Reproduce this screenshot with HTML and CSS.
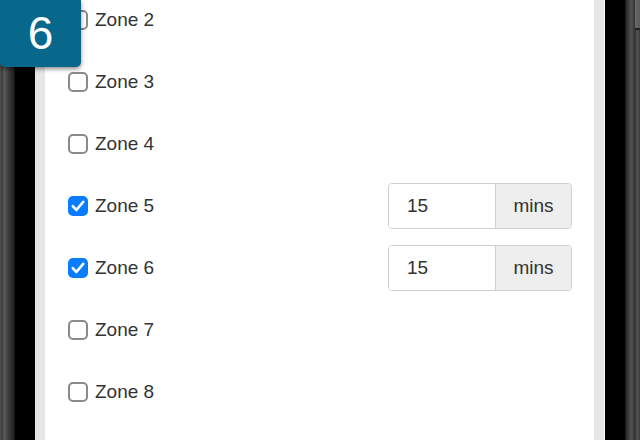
FILE: index.html
```html
<!DOCTYPE html>
<html>
<head>
<meta charset="utf-8">
<link rel="stylesheet" href="styles.css">
</head>
<body>
<div class="device">
  <div class="bezel bezel-left"></div>
  <div class="black"></div>
  <div class="gutter"></div>
  <div class="screen">
    <div class="list">
      <div class="row">
        <label class="check"><span class="box"></span><span class="name">Zone 2</span></label>
      </div>
      <div class="row">
        <label class="check"><span class="box"></span><span class="name">Zone 3</span></label>
      </div>
      <div class="row">
        <label class="check"><span class="box"></span><span class="name">Zone 4</span></label>
      </div>
      <div class="row">
        <label class="check"><span class="box checked"><svg viewBox="0 0 20 20" width="20" height="20"><polyline points="4.8,10.2 8.4,14 15.2,5.8" fill="none" stroke="#fff" stroke-width="2.6" stroke-linecap="round" stroke-linejoin="round"/></svg></span><span class="name">Zone 5</span></label>
        <div class="group"><div class="field">15</div><div class="addon">mins</div></div>
      </div>
      <div class="row">
        <label class="check"><span class="box checked"><svg viewBox="0 0 20 20" width="20" height="20"><polyline points="4.8,10.2 8.4,14 15.2,5.8" fill="none" stroke="#fff" stroke-width="2.6" stroke-linecap="round" stroke-linejoin="round"/></svg></span><span class="name">Zone 6</span></label>
        <div class="group"><div class="field">15</div><div class="addon">mins</div></div>
      </div>
      <div class="row">
        <label class="check"><span class="box"></span><span class="name">Zone 7</span></label>
      </div>
      <div class="row">
        <label class="check"><span class="box"></span><span class="name">Zone 8</span></label>
      </div>
    </div>
  </div>
  <div class="gutter gutter-right"></div>
  <div class="black"></div>
  <div class="bezel bezel-right"><div class="side-button"></div></div>
</div>
<div class="badge">6</div>
</body>
</html>
```
FILE: styles.css
```css
html, body {
  margin: 0;
  padding: 0;
  width: 640px;
  height: 440px;
  overflow: hidden;
  background: #000;
  font-family: "Liberation Sans", Arial, Helvetica, sans-serif;
}
.device {
  display: flex;
  height: 440px;
}
.bezel {
  width: 15px;
  flex: none;
  position: relative;
}
.bezel-left {
  background: linear-gradient(to right, #555 0, #3a3a3a 2px, #5c5c5c 4px, #474747 7px, #333 10px, #262626 13px, #111 15px);
}
.bezel-right {
  background: linear-gradient(to right, #151515 0, #3b3b3b 3px, #505050 6px, #474747 8px, #2e2e2e 10px, #555 12px, #3a3a3a 15px);
}
.side-button {
  position: absolute;
  right: 0;
  top: 0;
  width: 5px;
  height: 28px;
  background: linear-gradient(to right, #6a6a6a, #5a5a5a);
  border-bottom: 2px solid #222;
}
.black {
  width: 20px;
  flex: none;
  background: #000;
}
.gutter {
  width: 10px;
  flex: none;
  background: #e6e6e6;
}
.gutter-right {
  border-right: 1px solid #fafafa;
}
.screen {
  flex: 1;
  background: #fff;
  overflow: hidden;
}
.list {
  margin-top: -11px;
  padding: 0 22px 0 23px;
}
.row {
  height: 62px;
  display: flex;
  align-items: center;
  justify-content: space-between;
}
.check {
  display: flex;
  align-items: center;
  gap: 7px;
}
.box {
  width: 20px;
  height: 20px;
  box-sizing: border-box;
  border: 2px solid #8a8a8a;
  border-radius: 5px;
  display: block;
}
.box.checked {
  border: none;
  background: #0a7cff;
}
.box svg {
  display: block;
}
.name {
  font-size: 19px;
  color: #333;
}
.group {
  display: flex;
  width: 184px;
  height: 46px;
  margin-top: -1px;
  box-sizing: border-box;
  border: 1px solid #cfcfcf;
  border-radius: 4px;
  overflow: hidden;
  font-size: 19px;
  color: #333;
}
.field {
  width: 106px;
  padding-left: 18px;
  box-sizing: border-box;
  display: flex;
  align-items: center;
  background: #fff;
}
.addon {
  flex: 1;
  display: flex;
  align-items: center;
  justify-content: center;
  background: #eee;
  border-left: 1px solid #cfcfcf;
}
.badge {
  position: absolute;
  top: 0;
  left: 0;
  width: 81px;
  height: 67px;
  background: #08688c;
  border-radius: 0 0 5px 5px;
  box-shadow: 0 2px 4px rgba(0, 0, 0, 0.45);
  color: #fff;
  font-size: 46px;
  line-height: 66px;
  text-align: center;
  box-sizing: border-box;
}
```
